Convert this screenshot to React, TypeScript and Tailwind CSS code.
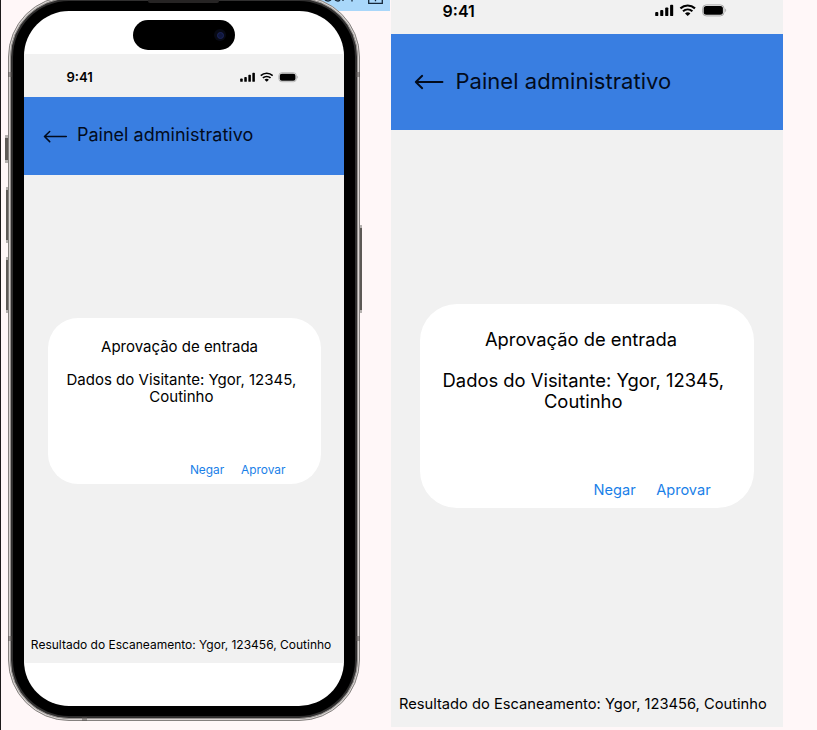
function StatusIcons() {
  return (
    <svg className="block" width="72" height="13" viewBox="0 0 72 13" fill="#000">
      <rect x="0.2" y="8" width="3.1" height="4.1" rx="0.9" />
      <rect x="5.2" y="6" width="3.1" height="6.1" rx="0.9" />
      <rect x="10.2" y="3.4" width="3.1" height="8.7" rx="0.9" />
      <rect x="15.1" y="0.8" width="3.1" height="11.3" rx="0.9" />
      <g fill="none" stroke="#000" strokeWidth="2.1">
        <path d="M25.4 4.4 C29.6 0.6 35.8 0.6 40 4.4" />
        <path d="M28 7.3 C30.7 4.9 34.7 4.9 37.4 7.3" />
      </g>
      <path d="M30 9.4 C31.6 8 33.8 8 35.4 9.4 L32.7 12.1 Z" />
      <rect x="47.6" y="0.9" width="21.4" height="11" rx="3.6" fill="none" stroke="#a9a9a9" strokeWidth="1" />
      <rect x="48.7" y="2" width="19.2" height="8.8" rx="2.5" />
      <path d="M70.2 4.6 C71.5 5.2 71.5 7.6 70.2 8.2 Z" fill="#a9a9a9" />
    </svg>
  );
}

function BackArrow() {
  return (
    <svg className="block" width="30" height="16" viewBox="0 0 30 16" fill="none" stroke="#020b1c" strokeWidth="1.9" strokeLinecap="round" strokeLinejoin="round">
      <path d="M1.8 8 H28.5 M8.2 1.8 L1.8 8 L8.2 14.2" />
    </svg>
  );
}

function AdminScreen() {
  return (
    <div className="flex h-[745.5px] w-[392.7px] flex-col bg-[#f1f1f1] whitespace-nowrap text-black">
      <div className="flex h-[53px] shrink-0 items-start justify-between pt-[22.5px] pr-[56.3px] pl-[52px]">
        <span className="text-[16px] leading-[14px] font-semibold">9:41</span>
        <StatusIcons />
      </div>
      <header className="flex h-[95.5px] shrink-0 items-start bg-[#397ee1] pt-[30.7px] pl-[23.6px] text-[#020b1c]">
        <div className="pt-[9.3px]">
          <BackArrow />
        </div>
        <h1 className="ml-[11.2px] text-[22px] leading-[32px] tracking-[0.05px]">Painel administrativo</h1>
      </header>
      <section className="mt-[174.5px] ml-[29.4px] flex h-[203.6px] w-[334px] shrink-0 flex-col rounded-[37px] bg-white pt-[25.4px]">
        <h2 className="mr-[12px] text-center text-[18.35px] leading-[20px]">Aprovação de entrada</h2>
        <p className="mt-[20.7px] mr-[7.5px] text-center text-[18.4px] leading-[20.45px]">
          Dados do Visitante: Ygor, 12345,
          <br />
          Coutinho
        </p>
        <div className="mt-auto mr-[43.3px] mb-[7.6px] flex justify-end gap-[20.5px] text-[14.6px] leading-[20px] text-[#1a7fe8]">
          <button>Negar</button>
          <button>Aprovar</button>
        </div>
      </section>
      <p className="mt-auto mb-[12.3px] ml-[8.4px] text-[14.7px] leading-[20px]">Resultado do Escaneamento: Ygor, 123456, Coutinho</p>
    </div>
  );
}

function SideButton({ className }: { className: string }) {
  return <div className={`absolute border-y-[3px] border-[#b5b1af] bg-[#5d5956] ${className}`} />;
}

function Phone() {
  return (
    <div className="relative mt-[-4px] ml-[8px] h-[725px] w-[352px] shrink-0">
      <SideButton className="top-[139px] left-[-3px] h-[28px] w-[3px]" />
      <SideButton className="top-[191px] left-[-2px] h-[56px] w-[2px]" />
      <SideButton className="top-[261px] left-[-2px] h-[56px] w-[2px]" />
      <SideButton className="top-[229px] right-[-2px] h-[88px] w-[2px]" />
      <div className="h-full w-full rounded-[61px] border border-[#85817f] bg-[#d9d5d3] p-px">
        <div className="h-full w-full rounded-[59px] border border-[#969290] bg-[#302f2f] p-[2px]">
          <div className="h-full w-full rounded-[56px] bg-black px-[11px] py-[10px]">
            <div className="relative h-full w-full overflow-hidden rounded-[45px] bg-white pt-[43px]">
              <div className="absolute top-[9px] left-[109px] flex h-[30px] w-[102px] items-center justify-end rounded-full bg-black pr-[9px]">
                <div className="flex h-[12px] w-[12px] items-center justify-center rounded-full bg-[#080a14]">
                  <div className="h-[7px] w-[7px] rounded-full border border-[#1b255c] bg-[#10173c]" />
                </div>
              </div>
              <div className="[zoom:0.817]">
                <AdminScreen />
              </div>
            </div>
          </div>
        </div>
      </div>
      <div className="absolute top-[4px] left-[140px] h-[3px] w-[71px] rounded-b-[2px] bg-[#262424]" />
      <div className="absolute top-[76px] left-0 h-[5px] w-[4px] bg-[#55515080]" />
      <div className="absolute top-[76px] right-0 h-[5px] w-[4px] bg-[#55515080]" />
      <div className="absolute bottom-[80px] left-0 h-[5px] w-[4px] bg-[#55515080]" />
      <div className="absolute right-0 bottom-[80px] h-[5px] w-[4px] bg-[#55515080]" />
      <div className="absolute bottom-0 left-[74px] h-[4px] w-[5px] bg-[#55515080]" />
    </div>
  );
}

export default function App() {
  return (
    <main className="relative flex h-[730px] w-[817px] overflow-hidden bg-[#fff7f8] font-[Inter,sans-serif]">
      <div className="absolute top-0 left-[300px] h-[11px] w-[90px] bg-[#a9d7fa]">
        <svg className="block" width="90" height="11" viewBox="0 0 90 11" fill="none" stroke="#142638" strokeWidth="1.3">
          <path d="M25 0 Q28 2 31 0 M35 0 Q38 2 40 0 M43 0 V1 M52 0 V1.5" />
          <path d="M68.7 0 V3.3 H82.3 V0 M75.5 0 V1.2" />
        </svg>
      </div>
      <div className="relative flex w-[390px] shrink-0 border-l border-[#1d1a1b]">
        <div className="-ml-px">
          <Phone />
        </div>
      </div>
      <div className="mt-[-19px] ml-[0.6px] shrink-0">
        <AdminScreen />
      </div>
    </main>
  );
}
